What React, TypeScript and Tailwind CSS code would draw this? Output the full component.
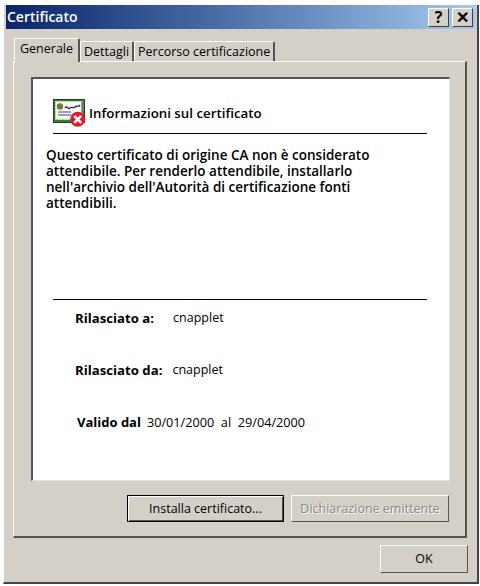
function CertIcon() {
  return (
    <svg width="34" height="28" viewBox="0 0 34 28" className="shrink-0">
      <rect x="0.5" y="0.5" width="31" height="23" fill="#2f7d3a" stroke="#17451f" />
      <rect x="2.5" y="2.5" width="26" height="18" fill="#fdfbe0" stroke="#cfe3c8" strokeDasharray="2 1" />
      <rect x="28.5" y="1" width="2" height="21" fill="#7a7a7a" />
      <circle cx="7" cy="7.5" r="3.2" fill="#77773a" />
      <path d="M12 9c2-3 3 2 5 0s3 1 5-1 3 1 5-2" fill="none" stroke="#2a2ac0" strokeWidth="1.4" />
      <path d="M5 13h13M5 16h13" stroke="#3a3ac8" strokeWidth="1.2" />
      <circle cx="24.7" cy="20.3" r="7.5" fill="#e3162b" />
      <path d="M21.2 16.8l7 7M28.2 16.8l-7 7" stroke="#fff" strokeWidth="2.6" />
    </svg>
  );
}

function CaptionButton({ children }: { children: string }) {
  return (
    <div className="flex h-[19px] w-[21px] items-center justify-center border border-t-white border-l-white border-r-[#404040] border-b-[#404040] bg-[#d4d0c8] text-[16px] leading-none font-bold text-black">
      {children}
    </div>
  );
}

function Tab({ label, active }: { label: string; active?: boolean }) {
  if (active) {
    return (
      <div className="relative z-10 -mb-px flex h-[24px] w-[66px] items-center justify-center rounded-t-[2px] border-t border-l border-r-2 border-t-white border-l-white border-r-[#555] bg-[#d4d0c8] pb-[3px]">
        {label}
      </div>
    );
  }
  return (
    <div className="flex h-[20px] items-center justify-center rounded-t-[2px] border-t border-l border-r-2 border-t-white border-l-white border-r-[#555] px-[3px]">
      {label}
    </div>
  );
}

function Row({ label, value, labelClass, valueClass }: { label: string; value: string; labelClass: string; valueClass: string }) {
  return (
    <div className="flex h-[52px] items-start">
      <span className={`font-bold ${labelClass}`}>{label}</span>
      <span className={valueClass}>{value}</span>
    </div>
  );
}

export default function App() {
  return (
    <div className="h-[586px] w-[480px] bg-white pt-[5px] pl-[3px] text-[12.5px] leading-[16px] text-black [font-family:'Open_Sans','Noto_Sans',sans-serif]">
      <div className="h-[579px] w-[476px] border-l border-b-2 border-r-2 border-l-white border-b-[#444] border-r-[#444] bg-[#d4d0c8] pl-[2px] pr-[1px]">
        {/* title bar */}
        <div className="flex h-[24px] items-center justify-between bg-gradient-to-r from-[#0a246a] to-[#a6caf0] pl-[1px] pr-[3px]">
          <span className="text-[14px] font-semibold text-white">Certificato</span>
          <div className="flex gap-[3px]">
            <CaptionButton>?</CaptionButton>
            <CaptionButton>✕</CaptionButton>
          </div>
        </div>

        <div className="pl-[7px] pr-[6px] pt-[10px]">
          {/* tabs */}
          <div className="flex h-[22px] items-end pl-[1px]">
            <Tab label="Generale" active />
            <Tab label="Dettagli" />
            <Tab label="Percorso certificazione" />
          </div>

          {/* tab panel */}
          <div className="h-[477px] w-[454px] border-t border-l border-r-2 border-b-2 border-t-white border-l-white border-r-[#555] border-b-[#555] pl-[17px] pr-[16px] pt-[15px]">
            <div className="h-[404px] w-[419px] border-t-2 border-l-2 border-b border-r border-t-[#555] border-l-[#555] border-b-[#e8e6e0] border-r-[#e8e6e0] bg-white pl-[13px] pr-[22px] pt-[20px]">
              <div className="flex h-[34px] items-start pl-[7px]">
                <CertIcon />
                <span className="ml-[2px] mt-[6px] text-[13.3px] font-semibold">Informazioni sul certificato</span>
              </div>
              <div className="ml-[7px] h-px bg-black" />
              <p className="mt-[13px] text-[13.5px] leading-[16px] font-semibold">
                Questo certificato di origine CA non è considerato
                <br />
                attendibile. Per renderlo attendibile, installarlo
                <br />
                nell'archivio dell'Autorità di certificazione fonti
                <br />
                attendibili.
              </p>
              <div className="ml-[7px] mt-[88px] h-px bg-black" />
              <div className="pt-[10px]">
                <Row label="Rilasciato a:" value="cnapplet" labelClass="ml-[29px] text-[13.2px]" valueClass="ml-[19px]" />
                <Row label="Rilasciato da:" value="cnapplet" labelClass="ml-[29px] text-[13.2px]" valueClass="ml-[10px]" />
                <Row label="Valido dal" value="30/01/2000  al  29/04/2000" labelClass="ml-[31px] text-[13px]" valueClass="ml-[6px] whitespace-pre text-[12.7px]" />
              </div>
            </div>

            <div className="mt-[14px] flex justify-end gap-[7px]">
              <div className="flex h-[27px] w-[157px] items-center justify-center border border-black bg-[#d4d0c8] shadow-[inset_1px_1px_0_#fff,inset_-1px_-1px_0_#555]">
                Installa certificato...
              </div>
              <div className="flex h-[27px] w-[158px] items-center justify-center border border-t-white border-l-white border-r-[#555] border-b-[#555] bg-[#d4d0c8] text-[#888] [text-shadow:1px_1px_0_#fff]">
                Dichiarazione emittente
              </div>
            </div>
          </div>

          <div className="mt-[7px] flex justify-end">
            <div className="mr-[2px] flex h-[28px] w-[88px] items-center justify-center border border-t-white border-l-white border-r-[#555] border-b-[#555]">
              OK
            </div>
          </div>
        </div>
      </div>
    </div>
  );
}
